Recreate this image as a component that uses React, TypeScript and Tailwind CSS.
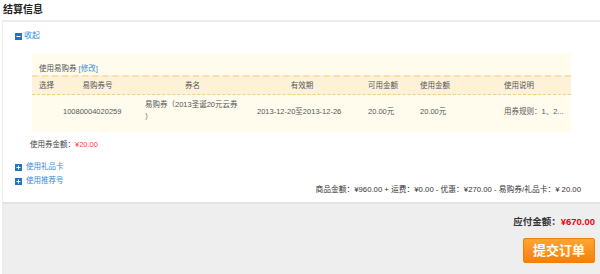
import React from "react";

function Sq({ plus }: { plus?: boolean }) {
  return (
    <svg width="7" height="7" viewBox="0 0 7 7" className="shrink-0">
      <rect x="0" y="0" width="7" height="7" fill="#1f74c2" />
      <rect x="1.5" y="3" width="4" height="1" fill="#fff" />
      {plus && <rect x="3" y="1.5" width="1" height="4" fill="#fff" />}
    </svg>
  );
}

export default function App() {
  const font = { fontFamily: '"Liberation Sans", "Noto Sans CJK SC", sans-serif' };
  return (
    <div className="w-[600px] h-[274px] overflow-hidden bg-white text-[7.5px] leading-[12px] text-[#444]" style={font}>
      <div className="h-[20px] pl-[3px] flex items-center text-[10px] font-bold text-[#222]">结算信息</div>
      <div className="ml-[2px] border-l border-t-2 border-[#ececec]">
        <div className="h-[28px] pl-[12px] flex items-center gap-[2px] text-[#3a8ad4] text-[8px]">
          <Sq />
          <span>收起</span>
        </div>
        <div className="mt-[3px] ml-[29px] w-[539px] bg-[#fffcee]">
          <div className="h-[22px] pt-[11px] pl-[7px] leading-[10px] text-[#555]">
            使用易购券 <span className="text-[#3a8ad4]">[修改]</span>
          </div>
          <div className="grid grid-cols-[23px_85px_105px_110px_55px_80px_81px] h-[20px] border-t-2 border-[#fbe0a9] bg-[#fdf2d8] border-b border-dashed border-b-[#f0cf8c] items-center text-[#555]">
            <div className="pl-[7px]">选择</div>
            <div className="text-center">易购券号</div>
            <div className="text-center">券名</div>
            <div className="text-center pl-[4px]">有效期</div>
            <div className="pl-[13px]">可用金额</div>
            <div className="pl-[10px]">使用金额</div>
            <div className="pl-[14px]">使用说明</div>
          </div>
          <div className="grid grid-cols-[23px_85px_105px_110px_55px_80px_81px] pt-[3px] pb-[8px] items-center text-[#555] leading-[13px]">
            <div></div>
            <div className="pl-[8px]">10080004020259</div>
            <div className="pl-[5px]">
              易购券（2013圣诞20元云券
              <br />）
            </div>
            <div className="pl-[12px] whitespace-nowrap">2013-12-20至2013-12-26</div>
            <div className="pl-[13px]">20.00元</div>
            <div className="pl-[10px]">20.00元</div>
            <div className="pl-[14px] whitespace-nowrap">用券规则：1、2...</div>
          </div>
        </div>
        <div className="mt-[7px] h-[12px] pl-[27px] text-[#444]">
          使用券金额：<span className="text-[#ff3a3a]">¥20.00</span>
        </div>
        <div className="mt-[9px] flex justify-between items-end pb-[6px]">
          <div className="pl-[12px] pb-[8px] text-[#3a8ad4]">
            <div className="h-[14px] flex items-center gap-[4px]">
              <Sq plus />
              <span>使用礼品卡</span>
            </div>
            <div className="h-[14px] flex items-center gap-[4px]">
              <Sq plus />
              <span>使用推荐号</span>
            </div>
          </div>
          <div className="pr-[19px] text-[#333] text-[7.75px] whitespace-nowrap">
            商品金额：¥960.00 + 运费：¥0.00 - 优惠：¥270.00 - 易购券/礼品卡：¥ 20.00
          </div>
        </div>
        <div className="border-t-2 border-[#e3e3e3] bg-[#eeeeee] h-[80px] pr-[5px] flex flex-col items-end">
          <div className="mt-[12px] h-[12px] text-[9.5px] leading-[12px] font-bold text-[#333]">
            应付金额：<span className="text-[#e60012]">¥670.00</span>
          </div>
          <button className="mt-[10px] w-[72px] h-[25px] rounded-[2px] border border-[#f08200] bg-gradient-to-b from-[#ffa531] to-[#f97f00] text-white text-[13px] font-bold leading-[23px]">
            提交订单
          </button>
        </div>
      </div>
    </div>
  );
}
